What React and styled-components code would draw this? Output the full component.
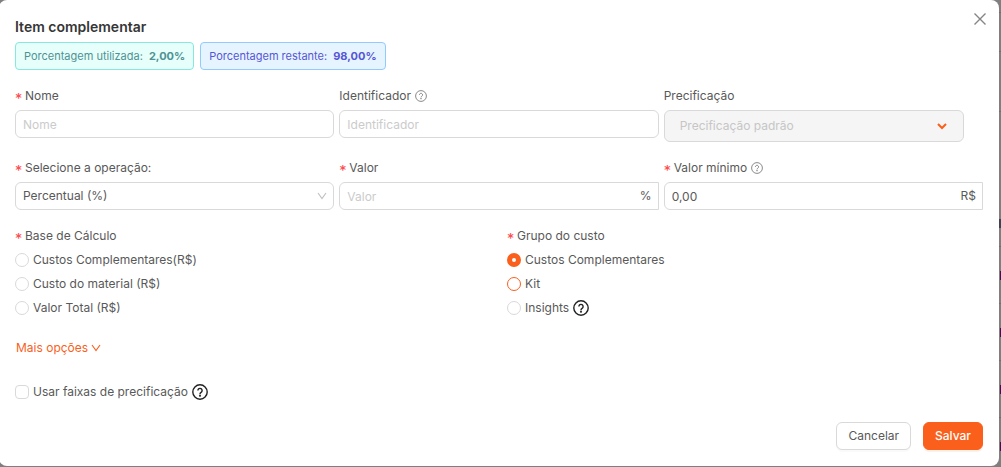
import React from "react";
import styled, { createGlobalStyle, css } from "styled-components";

const Global = createGlobalStyle`
  *, *::before, *::after { box-sizing: border-box; }
  body { margin: 0; background: #7f7f7f; }
  body, button, input, select {
    font-family: Inter, "Liberation Sans", sans-serif;
    font-size: 12px;
    line-height: 24px;
    color: #595959;
  }
`;

const Page = styled.div`
  display: grid;
  min-height: 100vh;
  overflow: hidden;
`;
const Backdrop = styled.div`
  grid-area: 1 / 1;
  display: flex;
  flex-direction: column;
  align-items: stretch;
  padding-top: 12px;
`;
const BackRow = styled.div`
  height: ${(p) => p.$height}px;
  border-top: 1px solid #6f6f6f;
  display: flex;
  justify-content: flex-end;
  align-items: ${(p) => (p.$end ? "flex-end" : "center")};
  padding-bottom: ${(p) => (p.$end ? 18 : 0)}px;
`;
const BackMark = styled.span`
  width: ${(p) => (p.$end ? 2 : 1)}px;
  height: 9px;
  background: ${(p) => (p.$end ? "#3a4550" : "#4b0a55")};
`;
const Modal = styled.form`
  grid-area: 1 / 1;
  align-self: start;
  margin: 0 2px 0 -1px;
  padding: 16px;
  background: #fff;
  border-radius: 8px;
`;
const Header = styled.header`
  display: flex;
  justify-content: space-between;
  align-items: flex-start;
  height: 26px;
`;
const Title = styled.h1`
  margin: 0;
  font-size: 14px;
  line-height: 22px;
  font-weight: 600;
  color: #363636;
`;
const CloseButton = styled.button`
  display: flex;
  margin: -7px -7px 0 0;
  padding: 2px;
  border: 0;
  background: none;
  color: #858585;
`;
const Tags = styled.div`
  display: flex;
  gap: 6px;
  margin-bottom: 14px;
`;
const tones = {
  teal: css`color: #4f9294; background: #e6fffb; border-color: #87e8de;`,
  blue: css`color: #5656d6; background: #e6f4ff; border-color: #91caff;`,
};
const Tag = styled.span`
  display: flex;
  gap: 6px;
  padding: 0 8px;
  line-height: 26px;
  font-size: 11px;
  border: 1px solid;
  border-radius: 4px;
  ${(p) => tones[p.$tone]}
`;
const FieldRow = styled.div`
  display: grid;
  grid-template-columns: repeat(3, 1fr);
  gap: 5px;
  align-items: start;
  margin-bottom: 14px;
`;
const Field = styled.div`
  display: flex;
  flex-direction: column;
  gap: 2px;
`;
const labelText = css`
  display: flex;
  align-items: center;
  gap: 4px;
  height: 24px;
  padding: 0;
`;
const Label = styled.label`${labelText}`;
const Legend = styled.legend`${labelText}`;
const Star = styled.span`
  font-family: "DejaVu Sans Mono", monospace;
  font-size: 12px;
  font-weight: 700;
  line-height: 20px;
  width: 6px;
  height: 20px;
  padding-top: 2px;
  color: #ff4d4f;
`;
const Control = styled.div`
  display: flex;
  align-items: center;
  height: ${(p) => (p.$disabled ? 32 : 28)}px;
  border: 1px solid #d9d9d9;
  border-radius: ${(p) => (p.$affix ? "6px 0 0 6px" : "6px")};
  background: ${(p) => (p.$disabled ? "#f5f5f5" : "#fff")};
  margin-right: ${(p) => (p.$disabled ? 19 : 0)}px;
`;
const TextInput = styled.input`
  flex: 1;
  min-width: 0;
  height: 26px;
  line-height: 24px;
  padding: 0 7px;
  border: 0;
  outline: 0;
  background: transparent;
  &::placeholder { color: #cbcbcb; opacity: 1; }
`;
const Affix = styled.span`
  padding-right: 6px;
`;
const SelectBox = styled(Control)`
  display: grid;
  > * { grid-area: 1 / 1; }
  > svg {
    justify-self: end;
    margin-right: ${(p) => (p.$disabled ? 16 : 6)}px;
    pointer-events: none;
  }
`;
const Select = styled.select`
  appearance: none;
  width: 100%;
  height: 26px;
  padding: 0 ${(p) => (p.disabled ? 15 : 7)}px;
  border: 0;
  outline: 0;
  background: transparent;
  opacity: 1;
  color: ${(p) => (p.disabled ? "#c6c6c6" : "#595959")};
`;
const Groups = styled.div`
  display: grid;
  grid-template-columns: 1fr 1fr;
  gap: 16px;
`;
const Group = styled.fieldset`
  margin: 0;
  padding: 0;
  border: 0;
  min-width: 0;
`;
const Choice = styled.label`
  display: flex;
  align-items: center;
  gap: 4px;
  height: 24px;
`;
const Radio = styled.input`
  appearance: none;
  width: 14px;
  height: 14px;
  margin: 0;
  border: 1px solid ${(p) => (p.$active ? "#fa5f1c" : "#d9d9d9")};
  border-radius: 50%;
  background: #fff;
  &:checked { border: 5px solid #fa5f1c; }
`;
const Checkbox = styled.input`
  appearance: none;
  width: 14px;
  height: 14px;
  margin: 0;
  border: 1px solid #d9d9d9;
  border-radius: 4px;
  background: #fff;
  &:checked { background: #fa5f1c; }
`;
const MoreButton = styled.button`
  display: flex;
  align-items: center;
  gap: 3px;
  height: 24px;
  margin: 16px 0 20px;
  padding: 0 1px;
  border: 0;
  background: none;
  color: #fa5f1c;
`;
const Footer = styled.footer`
  display: flex;
  justify-content: flex-end;
  gap: 12px;
  margin-top: 18px;
`;
const Button = styled.button`
  height: 28px;
  padding: 0 11px;
  line-height: 26px;
  border: 1px solid ${(p) => (p.$primary ? "#fa5f1c" : "#d9d9d9")};
  border-radius: 6px;
  background: ${(p) => (p.$primary ? "#fa5f1c" : "#fff")};
  color: ${(p) => (p.$primary ? "#fff" : "#595959")};
  font-weight: ${(p) => (p.$primary ? 500 : 400)};
  box-shadow: 0 2px 0 ${(p) => (p.$primary ? "#fff1e8" : "#fafafa")};
`;

const HelpIcon = ({ size = 12, strong }) => (
  <svg width={size} height={size} viewBox="0 0 16 16" fill="none" stroke={strong ? "#222" : "#7d7d7d"} strokeWidth={strong ? 1.4 : 1.2} role="img" aria-label="Ajuda">
    <circle cx="8" cy="8" r="7.2" />
    <path d="M5.9 6.5a2.1 2.1 0 1 1 3.2 1.8c-.8.5-1.1.8-1.1 1.6" />
    <circle cx="8" cy="11.7" r=".4" fill="currentColor" />
  </svg>
);
const Chevron = ({ color, bold }) => (
  <svg width="10" height="10" viewBox="0 0 10 10" fill="none" stroke={color} strokeWidth={bold ? 2 : 1.1} aria-hidden="true">
    <path d={bold ? "M1 3l4 4 4-4" : "M1 2l4 5.6L9 2"} />
  </svg>
);
const Close = () => (
  <svg width="16" height="16" viewBox="0 0 16 16" stroke="currentColor" strokeWidth="1.4" aria-hidden="true">
    <path d="M2.5 2.5l11 11M13.5 2.5l-11 11" />
  </svg>
);
const Required = () => <Star aria-hidden="true">*</Star>;

export default function App() {
  return (
    <>
      <Global />
      <Page>
        <Backdrop aria-hidden="true">
          <BackRow $height={39} />
          <BackRow $height={60} />
          <BackRow $height={135} $end><BackMark $end /></BackRow>
          {[0, 1, 2, 3].map((n) => (
            <BackRow key={n} $height={57}><BackMark /></BackRow>
          ))}
        </Backdrop>
        <Modal role="dialog" aria-labelledby="titulo" onSubmit={(e) => e.preventDefault()}>
          <Header>
            <Title id="titulo">Item complementar</Title>
            <CloseButton type="button" aria-label="Fechar"><Close /></CloseButton>
          </Header>
          <Tags>
            <Tag $tone="teal">Porcentagem utilizada: <b>2,00%</b></Tag>
            <Tag $tone="blue">Porcentagem restante: <b>98,00%</b></Tag>
          </Tags>
          <FieldRow>
            <Field>
              <Label htmlFor="nome"><Required />Nome</Label>
              <Control><TextInput id="nome" placeholder="Nome" /></Control>
            </Field>
            <Field>
              <Label htmlFor="ident">Identificador <HelpIcon /></Label>
              <Control><TextInput id="ident" placeholder="Identificador" /></Control>
            </Field>
            <Field>
              <Label htmlFor="prec">Precificação</Label>
              <SelectBox $disabled>
                <Select id="prec" disabled><option>Precificação padrão</option></Select>
                <Chevron color="#fa5f1c" bold />
              </SelectBox>
            </Field>
          </FieldRow>
          <FieldRow>
            <Field>
              <Label htmlFor="oper"><Required />Selecione a operação:</Label>
              <SelectBox>
                <Select id="oper"><option>Percentual (%)</option></Select>
                <Chevron color="#bfbfbf" />
              </SelectBox>
            </Field>
            <Field>
              <Label htmlFor="valor"><Required />Valor</Label>
              <Control $affix><TextInput id="valor" placeholder="Valor" /><Affix>%</Affix></Control>
            </Field>
            <Field>
              <Label htmlFor="minimo"><Required />Valor mínimo <HelpIcon /></Label>
              <Control $affix><TextInput id="minimo" defaultValue="0,00" /><Affix>R$</Affix></Control>
            </Field>
          </FieldRow>
          <Groups>
            <Group>
              <Legend><Required />Base de Cálculo</Legend>
              <Choice><Radio type="radio" name="base" />Custos Complementares(R$)</Choice>
              <Choice><Radio type="radio" name="base" />Custo do material (R$)</Choice>
              <Choice><Radio type="radio" name="base" />Valor Total (R$)</Choice>
            </Group>
            <Group>
              <Legend><Required />Grupo do custo</Legend>
              <Choice><Radio type="radio" name="grupo" defaultChecked />Custos Complementares</Choice>
              <Choice><Radio type="radio" name="grupo" $active />Kit</Choice>
              <Choice><Radio type="radio" name="grupo" />Insights <HelpIcon size={16} strong /></Choice>
            </Group>
          </Groups>
          <MoreButton type="button">Mais opções <Chevron color="#fa5f1c" /></MoreButton>
          <Choice><Checkbox type="checkbox" />Usar faixas de precificação <HelpIcon size={16} strong /></Choice>
          <Footer>
            <Button type="button">Cancelar</Button>
            <Button type="submit" $primary>Salvar</Button>
          </Footer>
        </Modal>
      </Page>
    </>
  );
}
